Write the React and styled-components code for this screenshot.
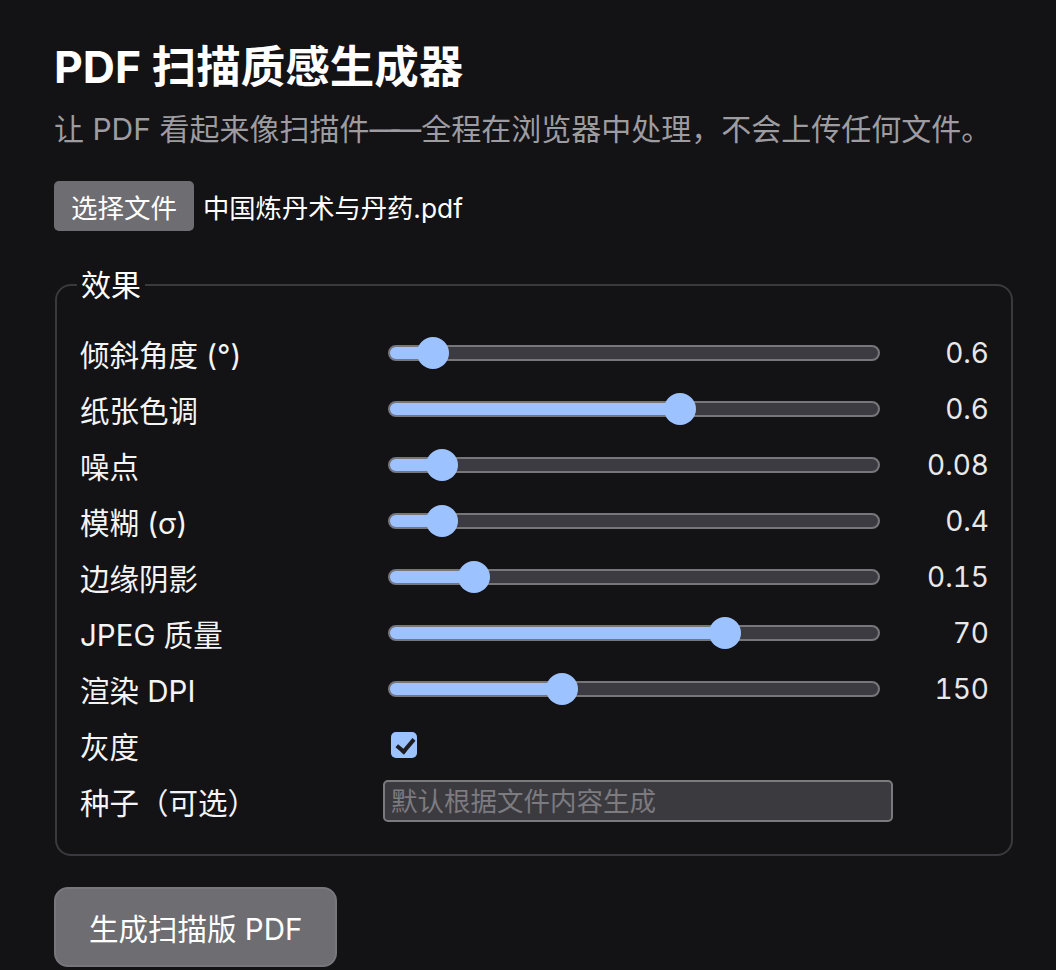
import React, { useState } from "react";
import styled, { createGlobalStyle } from "styled-components";

const GlobalStyle = createGlobalStyle`
  html, body {
    margin: 0;
    padding: 0;
    background: #131215;
    color: #f2f2f3;
    font-family: "Inter", "Noto Sans CJK SC", "Noto Sans", sans-serif;
    color-scheme: dark;
  }
  * { box-sizing: border-box; }
`;

const Page = styled.main`
  width: 1013px;
  padding: 41px 0 0 54px;
`;

const Title = styled.h1`
  margin: 0;
  font-size: 44.5px;
  line-height: 53px;
  font-weight: 700;
  color: #ffffff;
`;

const Subtitle = styled.p`
  margin: 14px 0 0;
  font-size: 30px;
  line-height: 42px;
  color: #9d9ca1;
`;

/* the double dash sits a little tighter than two full em widths */
const Dash = styled.span`
  letter-spacing: -0.27em;
  margin-right: 0.27em;
`;

const FileRow = styled.div`
  display: flex;
  align-items: center;
  gap: 9px;
  margin-top: 31px;
`;

const FileButton = styled.label`
  display: inline-flex;
  align-items: center;
  height: 50px;
  padding: 0 17px;
  background: #6e6d72;
  color: #ffffff;
  border-radius: 5px;
  font-size: 26.5px;
  cursor: pointer;
  input { display: none; }
`;

const FileName = styled.span`
  font-size: 26.3px;
  color: #ffffff;
`;

const Fieldset = styled.fieldset`
  margin: 37px 0 0 1px;
  padding: 23px 22px 25px 23px;
  border: 2px solid #3a393e;
  border-radius: 16px;
  min-width: 0;
`;

const Legend = styled.legend`
  padding: 0 4px;
  margin-left: -3px;
  font-size: 30px;
  line-height: 34px;
  color: #ffffff;
`;

const Grid = styled.div`
  display: grid;
  grid-template-columns: 303px 510px 1fr;
  grid-auto-rows: 56px;
  align-items: center;
`;

const Label = styled.label`
  font-size: 29.5px;
  color: #f4f4f5;
  white-space: nowrap;
`;

const Range = styled.input.attrs({ type: "range" })`
  -webkit-appearance: none;
  appearance: none;
  display: block;
  width: 492px;
  height: 32px;
  margin: 0 0 0 5px;
  background: transparent;
  cursor: pointer;

  &::-webkit-slider-runnable-track {
    height: 16px;
    border: 2px solid #77767b;
    border-radius: 8px;
    background: linear-gradient(
      to right,
      #9cc3ff 0,
      #9cc3ff calc(14px + var(--f) * (100% - 28px)),
      #3c3b41 calc(14px + var(--f) * (100% - 28px)),
      #3c3b41 100%
    );
  }

  &::-webkit-slider-thumb {
    -webkit-appearance: none;
    appearance: none;
    width: 32px;
    height: 32px;
    margin-top: -10px;
    border-radius: 50%;
    background: #9cc3ff;
    border: none;
  }
`;

const Value = styled.output`
  justify-self: end;
  font-size: 28px;
  color: #e8e8ea;
  font-variant-numeric: tabular-nums;
`;

const Check = styled.input.attrs({ type: "checkbox" })`
  -webkit-appearance: none;
  appearance: none;
  position: relative;
  width: 26px;
  height: 26px;
  margin: 0 0 0 8px;
  border-radius: 5px;
  background: #9cc3ff;
  cursor: pointer;

  &:checked::after {
    content: "";
    position: absolute;
    left: 9px;
    top: 3px;
    width: 7px;
    height: 14px;
    border-right: 4px solid #1d1c21;
    border-bottom: 4px solid #1d1c21;
    transform: rotate(40deg);
  }
`;

const SeedInput = styled.input`
  width: 510px;
  height: 42px;
  padding: 0 6px;
  border: 2px solid #7b7a7f;
  border-radius: 5px;
  background: #3b3a3f;
  color: #f2f2f3;
  font-family: inherit;
  font-size: 26.5px;
  outline: none;

  &::placeholder {
    color: #7c7b80;
  }
`;

const Generate = styled.button`
  margin-top: 31px;
  height: 80px;
  padding: 0 33px;
  border: 2px solid #78777c;
  border-radius: 14px;
  background: #6e6d72;
  color: #ffffff;
  font-family: inherit;
  font-size: 29.5px;
  cursor: pointer;
`;

const SETTINGS = [
  { key: "skew", label: "倾斜角度 (°)", min: 0, max: 10, step: 0.1, value: 0.6 },
  { key: "tone", label: "纸张色调", min: 0, max: 1, step: 0.05, value: 0.6 },
  { key: "noise", label: "噪点", min: 0, max: 1, step: 0.01, value: 0.08 },
  { key: "blur", label: "模糊 (σ)", min: 0, max: 5, step: 0.1, value: 0.4 },
  { key: "shadow", label: "边缘阴影", min: 0, max: 1, step: 0.01, value: 0.15 },
  { key: "quality", label: "JPEG 质量", min: 0, max: 100, step: 1, value: 70 },
  { key: "dpi", label: "渲染 DPI", min: 72, max: 300, step: 1, value: 150 },
];

export default function App() {
  const [values, setValues] = useState(() =>
    Object.fromEntries(SETTINGS.map((s) => [s.key, s.value]))
  );
  const [gray, setGray] = useState(true);
  const [seed, setSeed] = useState("");

  return (
    <>
      <GlobalStyle />
      <Page>
        <Title>PDF 扫描质感生成器</Title>
        <Subtitle>
          让 PDF 看起来像扫描件<Dash>——</Dash>全程在浏览器中处理，不会上传任何文件。
        </Subtitle>

        <FileRow>
          <FileButton>
            选择文件
            <input type="file" accept="application/pdf" />
          </FileButton>
          <FileName>中国炼丹术与丹药.pdf</FileName>
        </FileRow>

        <Fieldset>
          <Legend>效果</Legend>
          <Grid>
            {SETTINGS.map((s) => {
              const v = values[s.key];
              const f = (v - s.min) / (s.max - s.min);
              return (
                <React.Fragment key={s.key}>
                  <Label htmlFor={s.key}>{s.label}</Label>
                  <Range
                    id={s.key}
                    min={s.min}
                    max={s.max}
                    step={s.step}
                    value={v}
                    style={{ "--f": f }}
                    onChange={(e) =>
                      setValues({ ...values, [s.key]: Number(e.target.value) })
                    }
                  />
                  <Value>{v}</Value>
                </React.Fragment>
              );
            })}

            <Label htmlFor="gray">灰度</Label>
            <Check id="gray" checked={gray} onChange={(e) => setGray(e.target.checked)} />
            <span />

            <Label htmlFor="seed">种子（可选）</Label>
            <SeedInput
              id="seed"
              placeholder="默认根据文件内容生成"
              value={seed}
              onChange={(e) => setSeed(e.target.value)}
            />
            <span />
          </Grid>
        </Fieldset>

        <Generate type="button">生成扫描版 PDF</Generate>
      </Page>
    </>
  );
}
